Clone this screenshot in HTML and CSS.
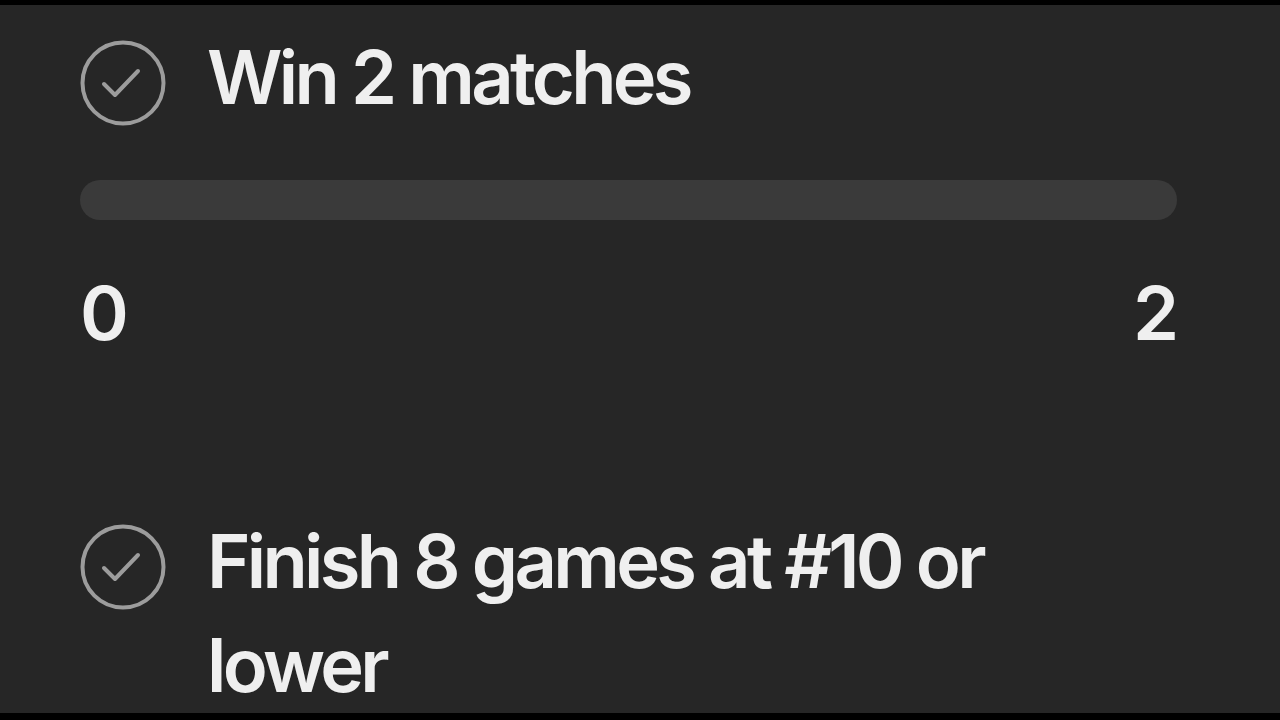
FILE: index.html
```html
<!DOCTYPE html>
<html lang="en">
<head>
<meta charset="utf-8">
<link rel="stylesheet" href="styles.css">
<title>Missions</title>
</head>
<body>
<main class="panel">
  <section class="task">
    <div class="task-head">
      <svg class="check" viewBox="0 0 86 86" aria-hidden="true">
        <circle cx="43" cy="43" r="40.5" fill="none" stroke="currentColor" stroke-width="4"/>
        <path d="M24 44 L35 55 L58 31" fill="none" stroke="currentColor" stroke-width="4" stroke-linecap="round" stroke-linejoin="round"/>
      </svg>
      <p class="task-title">Win 2 matches</p>
    </div>
    <div class="progress"><div class="progress-fill" style="width:0%"></div></div>
    <div class="progress-labels">
      <span>0</span>
      <span>2</span>
    </div>
  </section>
  <section class="task task-next">
    <div class="task-head">
      <svg class="check" viewBox="0 0 86 86" aria-hidden="true">
        <circle cx="43" cy="43" r="40.5" fill="none" stroke="currentColor" stroke-width="4"/>
        <path d="M24 44 L35 55 L58 31" fill="none" stroke="currentColor" stroke-width="4" stroke-linecap="round" stroke-linejoin="round"/>
      </svg>
      <p class="task-title">Finish 8 games at #10 or lower</p>
    </div>
  </section>
</main>
</body>
</html>
```
FILE: styles.css
```css
html, body {
  margin: 0;
  padding: 0;
  background: #000;
}
body {
  height: 720px;
  overflow: hidden;
  font-family: Inter, "Liberation Sans", sans-serif;
  color: #efefef;
}
.panel {
  margin-top: 5px;
  height: 708px;
  background: #262626;
  box-sizing: border-box;
  padding: 20px 103px 0 80px;
  overflow: hidden;
}
.task-head {
  display: flex;
  align-items: flex-start;
  gap: 41px;
}
.check {
  flex: none;
  width: 86px;
  height: 86px;
  margin-top: 15px;
  color: #9c9c9c;
}
.task-title {
  margin: 0;
  font-size: 74px;
  line-height: 104px;
  font-weight: 600;
  letter-spacing: -0.05em;
  max-width: 800px;
}
.progress {
  margin-top: 51px;
  height: 40px;
  border-radius: 20px;
  background: #3a3a3a;
  overflow: hidden;
}
.progress-fill {
  height: 100%;
  background: #e0e0e0;
}
.progress-labels {
  margin-top: 41px;
  display: flex;
  justify-content: space-between;
  font-size: 74px;
  line-height: 104px;
  font-weight: 600;
  letter-spacing: -0.03em;
}
.task-next {
  margin-top: 144px;
}
```
